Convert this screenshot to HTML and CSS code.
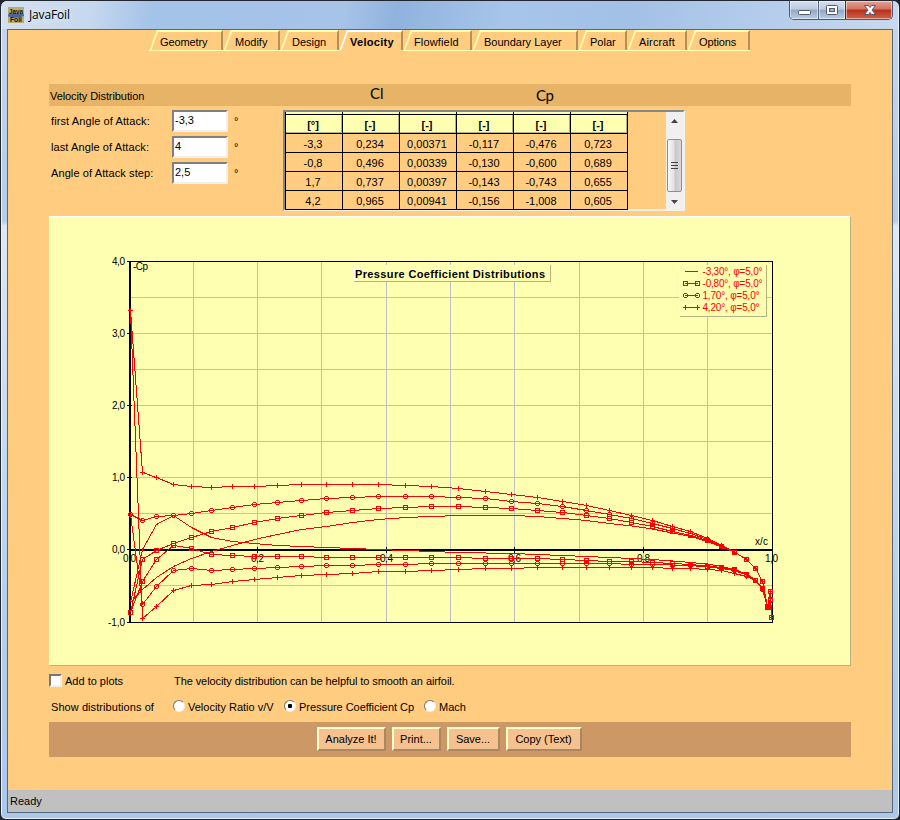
FILE: index.html
```html
<!DOCTYPE html>
<html lang="en">
<head>
    <meta charset="UTF-8">
    <meta name="viewport" content="width=device-width, initial-scale=1.0">
    <title>JavaFoil</title>
    <link rel="stylesheet" href="styles.css">
</head>
<body>
    <div class="window">
        <div class="titlebar">
            <svg class="app-icon" width="16" height="18" viewBox="0 0 16 18">
                <rect width="16" height="16" fill="#b5ae6c"/>
                <path d="M0 7.500Q5 5 16 7.500V9Q9 12 0 9.500z" fill="#4a64a0"/>
                <text x="1" y="7" textLength="14" lengthAdjust="spacingAndGlyphs">Java</text>
                <text x="2" y="15" textLength="12" lengthAdjust="spacingAndGlyphs">Foil</text>
            </svg>
            <span class="app-title">JavaFoil</span>
            <div class="window-buttons">
                <div class="win-btn min">
                    <svg width="28" height="18"><rect x="8.5" y="9.5" width="12" height="4" rx="1" fill="#fff" stroke="#515a70"/></svg>
                </div>
                <div class="win-btn max">
                    <svg width="26" height="18"><rect x="7.5" y="4.5" width="11" height="9" rx="1" fill="#fff" stroke="#515a70"/><rect x="10.5" y="7.5" width="5" height="3" fill="#9db4d4" stroke="#515a70"/></svg>
                </div>
                <div class="win-btn close">
                    <svg width="46" height="18"><path d="M18.500 4.500h4l1.500 2 1.500-2h4l-3.500 4.500 3.500 4.500h-4l-1.500-2-1.500 2h-4l3.500-4.500z" fill="#fff" stroke="#515a70"/></svg>
                </div>
            </div>
        </div>

        <div class="client">
            <div class="tabs">
                <div class="tab geometry">Geometry</div>
                <div class="tab modify">Modify</div>
                <div class="tab design">Design</div>
                <div class="tab velocity active">Velocity</div>
                <div class="tab flowfield">Flowfield</div>
                <div class="tab boundary">Boundary Layer</div>
                <div class="tab polar">Polar</div>
                <div class="tab aircraft">Aircraft</div>
                <div class="tab options">Options</div>
            </div>

            <div class="card">
                <div class="card-title">
                    <span class="name">Velocity Distribution</span>
                    <span class="note cl">Cl</span>
                    <span class="note cp">Cp</span>
                </div>

                <div class="top-row">
                    <div class="form">
                        <div class="field"><label>first Angle of Attack:</label><input type="text" value="-3,3"><span>°</span></div>
                        <div class="field"><label>last Angle of Attack:</label><input type="text" value="4"><span>°</span></div>
                        <div class="field"><label>Angle of Attack step:</label><input type="text" value="2,5"><span>°</span></div>
                    </div>
                    <div class="table-box">
                        <div class="table">
                            <i></i><i></i><i></i><i></i><i></i><i></i>
                            <b>[°]</b><b>[-]</b><b>[-]</b><b>[-]</b><b>[-]</b><b>[-]</b>
                            <span>-3,3</span><span>0,234</span><span>0,00371</span><span>-0,117</span><span>-0,476</span><span>0,723</span>
                            <span>-0,8</span><span>0,496</span><span>0,00339</span><span>-0,130</span><span>-0,600</span><span>0,689</span>
                            <span>1,7</span><span>0,737</span><span>0,00397</span><span>-0,143</span><span>-0,743</span><span>0,655</span>
                            <span>4,2</span><span>0,965</span><span>0,00941</span><span>-0,156</span><span>-1,008</span><span>0,605</span>
                        </div>
                        <div class="scrollbar">
                            <svg width="17" height="27"><path d="M5 11h7l-3.500-4z" fill="#444"/></svg>
                            <div class="thumb"><i></i><i></i><i></i></div>
                            <svg width="17" height="17"><path d="M5 8h7l-3.500 4z" fill="#444"/></svg>
                        </div>
                    </div>
                </div>

                <svg class="chart" id="chart" width="800" height="448" viewBox="50 217 800 448"></svg>

                <div class="row add-row">
                    <i class="checkbox"></i>
                    <span class="add">Add to plots</span>
                    <span class="hint">The velocity distribution can be helpful to smooth an airfoil.</span>
                </div>
                <div class="row show-row">
                    <span class="show">Show distributions of</span>
                    <i class="radio"></i><span class="ratio">Velocity Ratio v/V</span>
                    <i class="radio checked"></i><span class="pressure">Pressure Coefficient Cp</span>
                    <i class="radio"></i><span class="mach">Mach</span>
                </div>

                <div class="button-bar">
                    <button class="analyze">Analyze It!</button>
                    <button class="print">Print...</button>
                    <button class="save">Save...</button>
                    <button class="copy">Copy (Text)</button>
                </div>
            </div>

            <div class="statusbar">Ready</div>
        </div>
    </div>
    <script src="chart.js"></script>
</body>
</html>
```
FILE: styles.css
```css
* {
    box-sizing: border-box;
}

body {
    margin: 0;
    background: #20242c;
    font-family: "Liberation Sans", Arial, sans-serif;
    font-size: 11px;
    color: #000;
}

.window {
    display: flex;
    flex-direction: column;
    width: 900px;
    height: 820px;
    padding: 0 6px 6px;
    border: 1px solid #22262e;
    border-radius: 7px 7px 6px 6px;
    background: linear-gradient(#c3d6ee 0, #b4cdea 220px, #dbe8f5 225px, #b2d0f0 600px, #a9c8ec 100%);
    box-shadow: inset 0 0 0 1px #e8f2fc;
}

/* title bar */
.titlebar {
    display: flex;
    height: 28px;
    margin: 0 -5px;
    padding: 6px 5px 0 6px;
    border-radius: 6px 6px 0 0;
    background: linear-gradient(100deg, #d3e0f0 0, #c5d8ee 90px, #a4c3e8 150px, #a6c3e8 340px, #8fb3dd 390px, #a7c5ea 500px, #a2c1e6 620px, #b8cfec 780px, #c7d9ef 100%);
}

.app-icon {
    flex: none;
    overflow: visible;
}

.app-icon text {
    font-size: 7px;
    font-weight: bold;
    fill: #111;
}

.app-title {
    margin-left: 5px;
    font-family: "Open Sans", sans-serif;
    font-size: 12px;
    line-height: 16px;
    letter-spacing: -0.15px;
    text-shadow: 0 0 8px #fff;
}

.window-buttons {
    display: flex;
    height: 19px;
    margin: -6px 0 0 auto;
    border: 1px solid #4c5870;
    border-top: none;
    border-radius: 0 0 5px 5px;
    overflow: hidden;
}

.win-btn {
    background: linear-gradient(#d4dfed 0, #bccbdf 45%, #93a7c3 50%, #b9cce3 100%);
    box-shadow: inset 0 0 0 1px rgba(255, 255, 255, 0.5);
}

.win-btn svg {
    display: block;
}

.max {
    border-left: 1px solid #56647d;
}

.close {
    border-left: 1px solid #5a2620;
    background: linear-gradient(#e3a294 0, #d27260 45%, #b82e1b 50%, #cf6244 100%);
}

/* client area */
.client {
    display: flex;
    flex-direction: column;
    flex: 1;
    border: 1px solid #576879;
    background: #ffcc80;
}

.tabs {
    display: flex;
    height: 21px;
    margin-left: 141px;
}

.tab {
    position: relative;
    height: 21px;
    padding-left: 11px;
    border-bottom: 1px solid #ffffb2;
    line-height: 25px;
    white-space: nowrap;
}

.tab::before {
    content: "";
    position: absolute;
    left: 4px;
    top: 0;
    right: 1px;
    bottom: 0;
    border-top: 2px solid #ffffb2;
    border-left: 2px solid #ffffb2;
    transform: skewX(-20deg);
    transform-origin: 0 50%;
    clip-path: inset(0 12px 0 0);
}

.tab::after {
    content: "";
    position: absolute;
    right: 0;
    top: 0;
    bottom: 0;
    width: 20px;
    border-top: 2px solid #ffffb2;
    border-right: 2px solid #b38f59;
}

.active {
    font-weight: bold;
    border-bottom-color: #ffcc80;
}

.active::before,
.active::after {
    border-top-color: #fff;
    border-left-color: #fff;
}

.geometry { width: 74px; letter-spacing: -0.1px; }
.modify { width: 57px; padding-left: 12px; }
.design { width: 59px; padding-left: 12px; }
.velocity { width: 64px; letter-spacing: 0.3px; }
.flowfield { width: 69px; letter-spacing: 0.15px; }
.boundary { width: 106px; padding-left: 12px; }
.polar { width: 49px; padding-left: 12px; }
.aircraft { width: 60px; padding-left: 12px; letter-spacing: 0.15px; }
.options { width: 63px; padding-left: 12px; letter-spacing: -0.1px; }

.card {
    flex: 1;
    width: 802px;
    margin: 33px 0 0 41px;
}

.card-title {
    display: flex;
    height: 22px;
    background: #e6b367;
    line-height: 24px;
}

.card-title .name {
    width: 321px;
    padding-left: 1px;
    letter-spacing: -0.08px;
}

.note {
    font-family: Lato, sans-serif;
    font-size: 15px;
}

.cl {
    width: 166px;
    line-height: 18px;
}

.cp {
    line-height: 22px;
    letter-spacing: -0.5px;
}

.top-row {
    display: flex;
    height: 110px;
    padding-top: 4px;
}

.form {
    width: 234px;
}

.field {
    display: flex;
    height: 26px;
    line-height: 22px;
}

.field label {
    width: 123px;
    padding-left: 2px;
    letter-spacing: 0.1px;
}

.field input {
    width: 56px;
    height: 22px;
    padding: 0 0 2px 1px;
    border: 2px solid;
    border-color: #808080 #f0f0f0 #f0f0f0 #808080;
    background: #fff;
    font: inherit;
}

.field span {
    padding-left: 6px;
}

/* results table */
.table-box {
    display: flex;
    justify-content: space-between;
    width: 402px;
    height: 101px;
    border: 2px solid;
    border-color: #888 #f6f1e8 #f6f1e8 #888;
}

.table {
    display: grid;
    grid-template-columns: 58px repeat(5, 57px);
    grid-template-rows: 3px repeat(5, 19px);
    text-align: center;
    line-height: 20px;
}

.table > * {
    padding-right: 2px;
    border-right: 1px solid #000;
    border-bottom: 1px solid #000;
}

.table > :nth-child(6n + 1) {
    border-left: 1px solid #000;
}

.table i {
    background: #ffffb2;
}

.table b {
    background: #ffffb2;
    box-shadow: inset -1px -1px #b3b37d;
    line-height: 21px;
}

.scrollbar {
    width: 17px;
    background: #f0f0f0;
}

.scrollbar svg {
    display: block;
}

.thumb {
    display: flex;
    flex-direction: column;
    align-items: center;
    justify-content: center;
    gap: 2px;
    width: 15px;
    height: 53px;
    margin-left: 1px;
    border: 1px solid #8f8f8f;
    border-radius: 2px;
    background: linear-gradient(90deg, #f7f7f7, #e2e2e4 45%, #c8c8cc 55%, #d9d9db);
}

.thumb i {
    width: 7px;
    height: 1px;
    background: #444;
}

/* plot */
.chart {
    display: block;
    box-sizing: content-box;
    border: 1px solid;
    border-color: #fff #b3b37d #b3b37d #fff;
    background: #ffffb2;
    shape-rendering: crispEdges;
}

.chart text {
    font-size: 10px;
}

.chart .title {
    font-size: 11px;
    font-weight: bold;
}

.chart .red {
    fill: #f00;
}

.grid { stroke: #c0c0c0; }
.axis { stroke: #000; fill: none; }
.curve { stroke: #f00; fill: none; }

/* options below the plot */
.row {
    display: flex;
    align-items: center;
    height: 26px;
    white-space: nowrap;
}

.add-row {
    padding-top: 4px;
}

.show-row {
    padding-top: 3px;
}

.checkbox {
    width: 13px;
    height: 13px;
    margin-bottom: 2px;
    border: 2px solid;
    border-color: #777 #f4efe6 #f4efe6 #777;
    background: #fff;
}

.add {
    width: 109px;
    margin-left: 3px;
}

.hint {
    letter-spacing: -0.08px;
}

.show {
    width: 122px;
    padding-left: 2px;
    letter-spacing: 0.07px;
}

.radio {
    width: 12px;
    height: 12px;
    margin: 0 3px 2px 2px;
    border: 1px solid;
    border-color: #777 #f4efe6 #f4efe6 #777;
    border-radius: 50%;
    background: #fff;
}

.checked {
    background: radial-gradient(circle, #000 2px, #fff 2.500px);
}

.ratio { width: 94px; }
.pressure { width: 123px; letter-spacing: -0.04px; }

.button-bar {
    display: flex;
    justify-content: center;
    gap: 6px;
    height: 35px;
    margin-top: 4px;
    padding: 5px 2px 0 0;
    background: #cc9966;
}

.button-bar button {
    height: 24px;
    padding: 0;
    border: 2px solid;
    border-color: #ffffcc #a98860 #a98860 #ffffcc;
    background: #f5c18e;
    font: inherit;
    color: #000;
}

.analyze { width: 69px; }
.print { width: 49px; }
.save { width: 53px; }
.copy { width: 76px; }

.statusbar {
    height: 22px;
    padding-left: 2px;
    background: #c0c0c0;
    line-height: 23px;
}
```
FILE: chart.js
```javascript
const chart = document.getElementById('chart');

// chord stations
const xs = [130.5, 142.5, 156.5, 173.5, 191.5, 211.5, 232.5, 254.5, 277.5, 301.5, 326.5, 352.5, 378.5,
    405.5, 431.5, 458.5, 485.5, 511.5, 537.5, 562.5, 586.5, 609.5, 631.5, 652.5, 672.5, 690.5,
    707.5, 721.5, 734.5, 746.5, 755.5, 762.5, 767.5, 770.5, 771.5];

const tailUpper = [552, 559.5, 568.5, 581.5, 606.5, 591.5, 617.5];

const curves = [
    { marker: 'none', y: [602.5, 589.5, 577.5, 566.5, 558.5, 551.5, 545.5, 539.5, 534.5, 529.5, 526.5, 522.5, 519.5, 517.5, 516.5, 515.5, 515.5, 515.5, 516.5, 518.5, 520.5, 523.5, 526, 529, 533, 536.5, 541.5, 547, ...tailUpper] },
    { marker: 'none', y: [602.5, 549.5, 524.5, 515.5, 527.5, 537.5, 541.5, 543.5, 545.5, 546.5, 547.5, 548.5, 549.5, 550.5, 551.5, 552.5, 553, 553.5, 554.5, 555.5, 556.5, 557.5, 558.5, 559.5, 561, 562.5, 564, 566.5, 569.5, 574, 580, 589, 607.5, 598.5, 617.5] },
    { marker: 'square', y: [612.5, 559.5, 550.5, 543.5, 537.5, 531.5, 527.5, 522.5, 518.5, 515.5, 512.5, 510.5, 508.5, 507.5, 506.5, 506.5, 507.5, 508.5, 510.5, 512.5, 515.5, 518.5, 522.5, 526.5, 531.5, 535.5, 540.5, 546.5, ...tailUpper] },
    { marker: 'square', y: [612.5, 581.5, 559.5, 545.5, 548.5, 554.5, 555.5, 556.5, 556.5, 556.5, 557.5, 557.5, 557.5, 557.5, 557.5, 557.5, 558.5, 558.5, 558.5, 559.5, 560.5, 561.5, 561.5, 562.5, 563.5, 564.5, 566, 567.5, 569.5, 574.5, 580, 588.5, 607.5, 599.5, 617.5] },
    { marker: 'circle', y: [514.5, 520.5, 516.5, 515.5, 513.5, 510.5, 507.5, 504.5, 502.5, 500.5, 498.5, 497.5, 496.5, 496.5, 496.5, 497.5, 498.5, 501.5, 503.5, 506.5, 510.5, 514.5, 518.5, 523.5, 528.5, 533.5, 539.5, 546, ...tailUpper] },
    { marker: 'circle', y: [514.5, 604.5, 586.5, 570.5, 568.5, 570.5, 569.5, 568.5, 567.5, 566.5, 565.5, 565.5, 564.5, 564.5, 563.5, 563.5, 563.5, 563.5, 563.5, 563.5, 563.5, 563.5, 564.5, 564.5, 565, 565.5, 567, 568.5, 570.5, 575, 580, 589, 607.5, 600.5, 617.5] },
    { marker: 'plus', y: [310.5, 472.5, 477.5, 484.5, 486.5, 487.5, 486.5, 486.5, 485.5, 484.5, 484.5, 484.5, 484.5, 485.5, 486.5, 488.5, 491.5, 494.5, 497.5, 501.5, 505.5, 510.5, 515.5, 520.5, 526.5, 531.5, 538.5, 545.5, ...tailUpper] },
    { marker: 'plus', y: [310.5, 618.5, 606.5, 590.5, 585.5, 584.5, 581.5, 579.5, 577.5, 575.5, 574.5, 573.5, 571.5, 571.5, 570.5, 569.5, 568.5, 568.5, 567.5, 567.5, 567.5, 567.5, 567.5, 567.5, 568.5, 568.5, 569.5, 570.5, 573.5, 576.5, 580.5, 589, 607.5, 601.5, 617.5] }
];

function line(x1, y1, x2, y2, cls, width) {
    return `<path class="${cls}" d="M${x1} ${y1}L${x2} ${y2}" stroke-width="${width || 1}"/>`;
}

function text(x, y, str, length, cls) {
    return `<text x="${x}" y="${y}" textLength="${length}" class="${cls || ''}">${str}</text>`;
}

function marker(type, x, y) {
    if (type === 'square') return `<rect class="curve" x="${x - 2}" y="${y - 2}" width="4" height="4"/>`;
    if (type === 'circle') return `<path class="curve" d="M${x - 1} ${y - 2}h2l1 1v2l-1 1h-2l-1 -1v-2z"/>`;
    if (type === 'plus') return `<path class="curve" d="M${x - 2.5} ${y}h5M${x} ${y - 2.5}v5"/>`;
    return '';
}

let out = '';

// grid
[193.5, 257.5, 321.5, 386.5, 450.5, 514.5, 579.5, 643.5, 707.5].forEach(x => out += line(x, 262, x, 622, 'grid'));
[297.5, 333.5, 369.5, 405.5, 441.5, 477.5, 513.5, 585.5].forEach(y => out += line(131, y, 772, y, 'grid'));

// axes
out += '<rect class="axis" x="130.5" y="261.5" width="642" height="361"/>';
out += line(130, 261, 130, 623, 'axis', 2);
out += line(130, 550, 773, 550, 'axis', 2);
['4,0', '3,0', '2,0', '1,0', '0,0', '-1,0'].forEach((label, i) => {
    const y = i === 5 ? 622.5 : 261.5 + i * 72;
    out += line(127, y, 132, y, 'axis');
    out += text(label.length > 3 ? 108 : 112, y + 3, label, label.length > 3 ? 17 : 13);
});
['0,0', '0,2', '0,4', '0,6', '0,8', '1,0'].forEach((label, i) => {
    const x = Math.round(130 + i * 128.4);
    if (i > 0 && i < 5) out += line(x - 0.5, 547, x - 0.5, 553, 'axis');
    out += text(x - 7, 562, label, 13);
});
out += text(133, 270, '-Cp', 15);
out += text(755, 545, 'x/c', 13);

// curves
curves.forEach(c => {
    out += `<polyline class="curve" points="${xs.map((x, i) => x + ',' + c.y[i]).join(' ')}"/>`;
    xs.forEach((x, i) => out += marker(c.marker, x, c.y[i]));
});

// title
out += '<rect x="354" y="265" width="197" height="17" fill="#ffffb2"/>';
out += '<path d="M354.500 281V265.500H550" stroke="#fff" fill="none"/><path d="M354 281.500H550.500V265" stroke="#b3b37d" fill="none"/>';
out += text(355, 278, 'Pressure Coefficient Distributions', 190, 'title');

// legend
out += '<rect x="679" y="265" width="88" height="52" fill="#ffffb2"/>';
out += '<path d="M679.500 316V265.500H766" stroke="#fff" fill="none"/><path d="M680 316.500H766.500V265" stroke="#b3b37d" fill="none"/>';
[['-3,30°, φ=5,0°', 'none'], ['-0,80°, φ=5,0°', 'square'], ['1,70°, φ=5,0°', 'circle'], ['4,20°, φ=5,0°', 'plus']].forEach(([label, type], i) => {
    const y = 271.5 + i * 12;
    out += line(685, y, 698, y, 'curve') + marker(type, 685.5, y) + marker(type, 697.5, y);
    out += text(702.5, y + 3.5, label, i < 2 ? 60 : 57, 'red');
});

chart.innerHTML = out;
```
